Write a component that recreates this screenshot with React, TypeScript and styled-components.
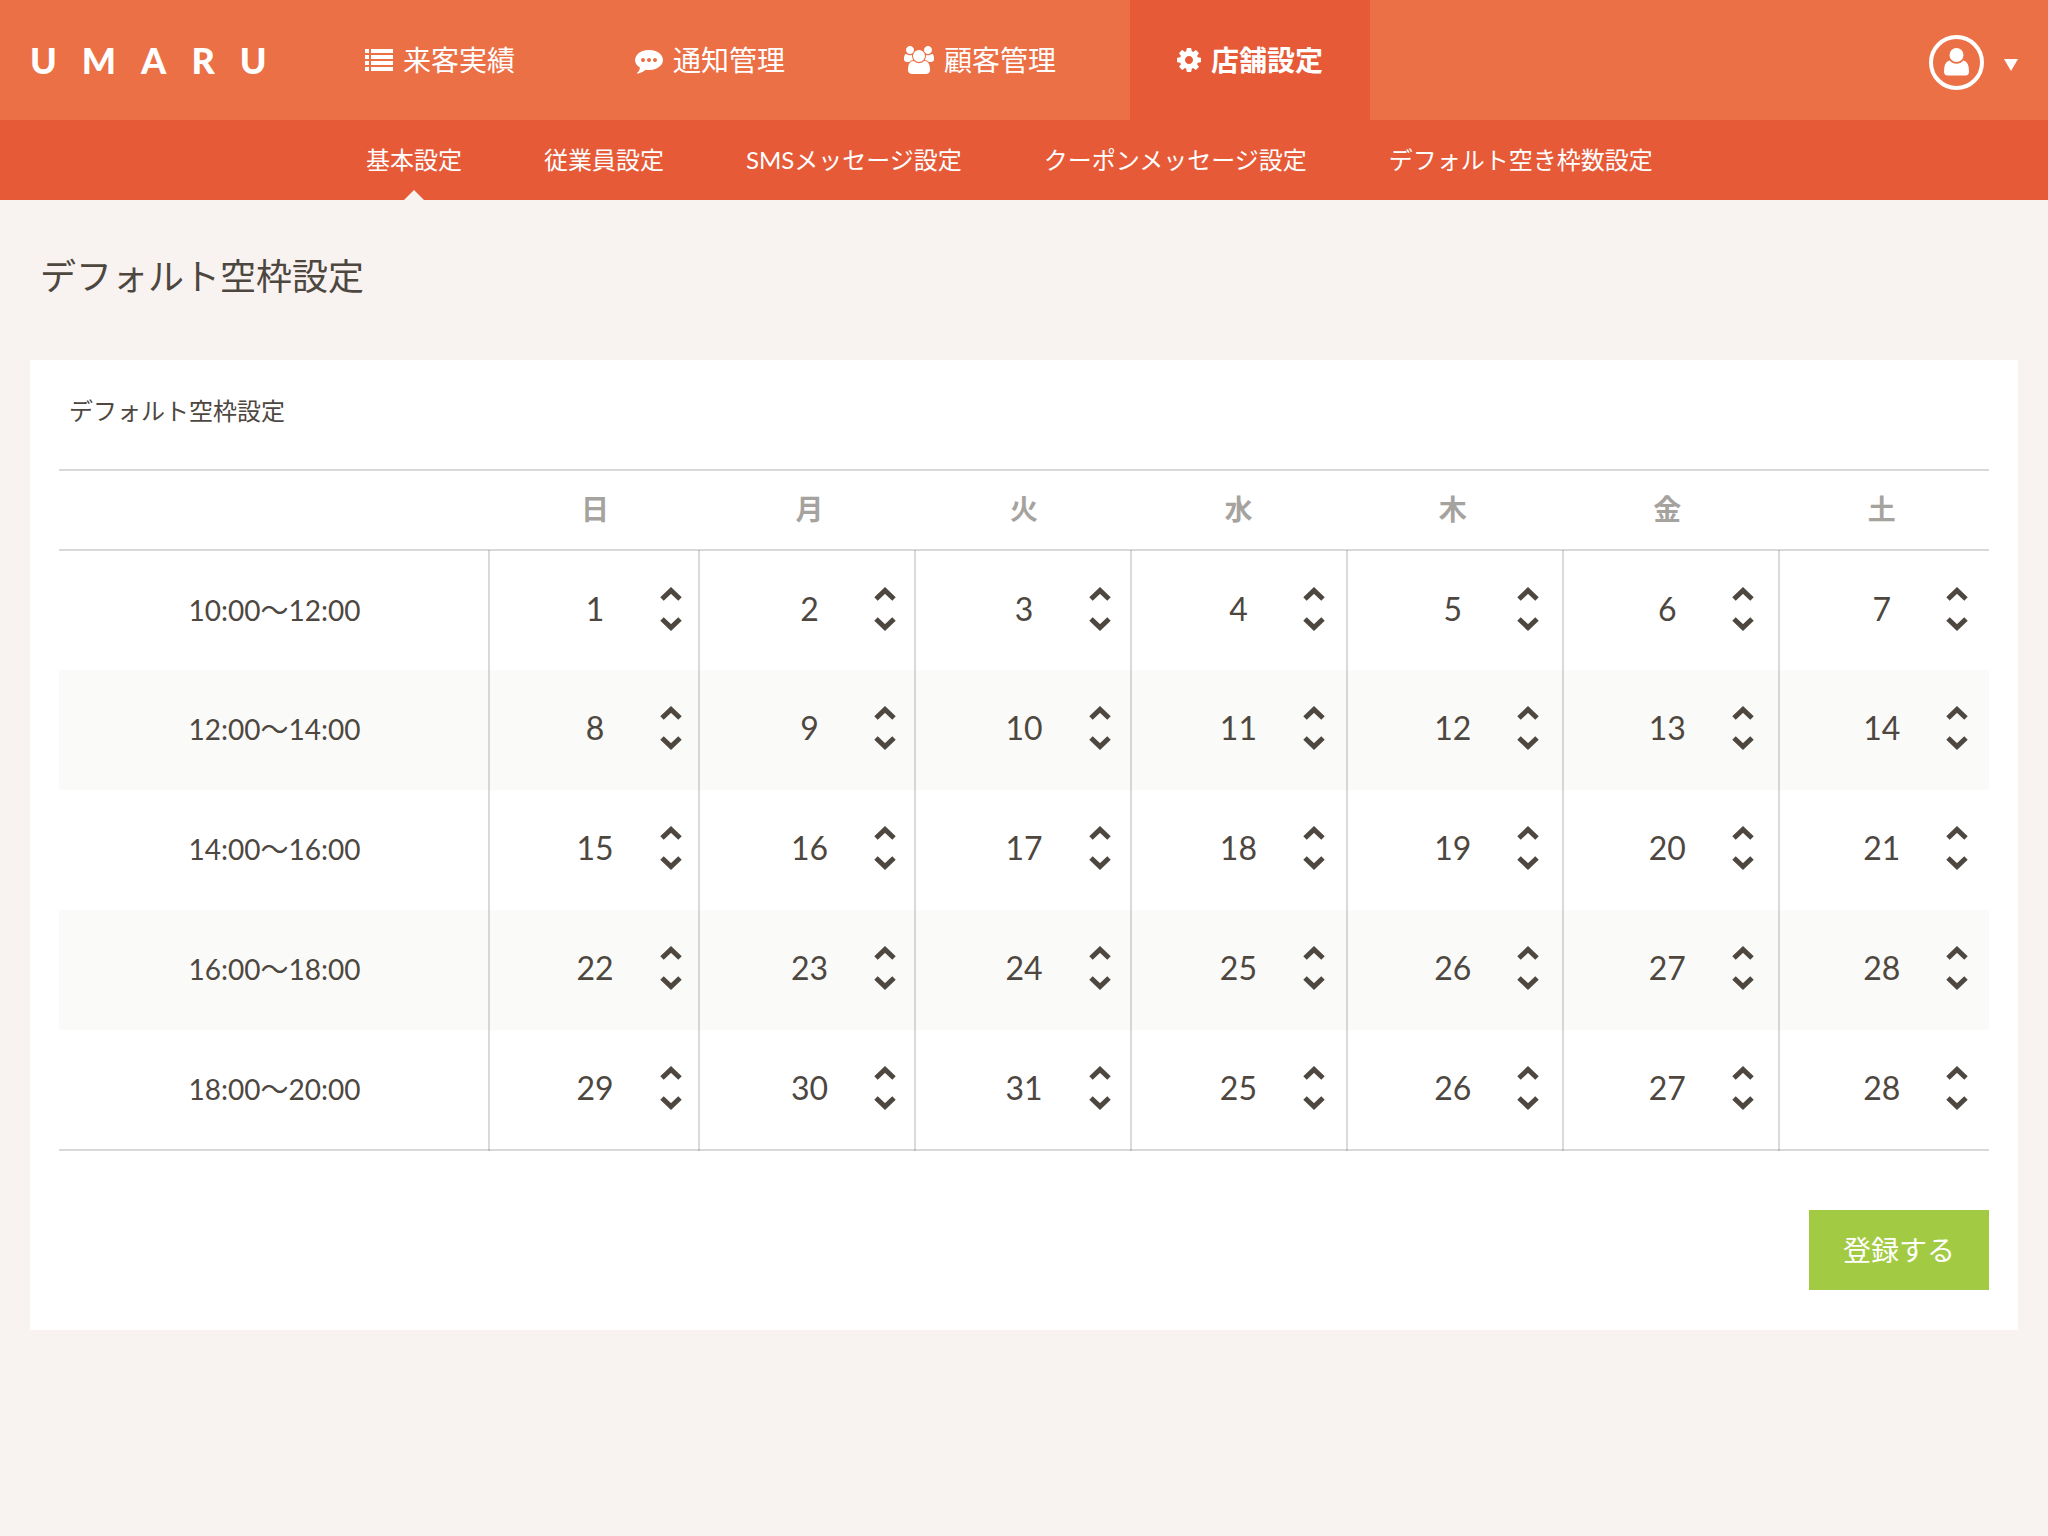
import React, { useState } from 'react';
import styled, { createGlobalStyle } from 'styled-components';

const GlobalStyle = createGlobalStyle`
  *, *::before, *::after { box-sizing: border-box; }
  body {
    margin: 0;
    background: #f8f3f0;
    color: #4d473f;
    font-family: Lato, "Noto Sans CJK JP", sans-serif;
  }
  button, input { font: inherit; color: inherit; }
`;

const Page = styled.div`
  min-height: 100vh;
`;

const TopBar = styled.header`
  display: flex;
  align-items: center;
  height: 120px;
  background: #eb7046;
  color: #fff;
`;

const Brand = styled.a`
  display: flex;
  flex: 0 0 320px;
  gap: 25px;
  padding-left: 30px;
  color: #fff;
  font-size: 36px;
  font-weight: 900;
  line-height: 48px;
  text-decoration: none;
`;

const MainNav = styled.nav`
  display: flex;
  flex: 1;
  align-self: stretch;
  gap: 30px;
`;

const MainLink = styled.a<{ $active?: boolean }>`
  display: flex;
  align-items: center;
  justify-content: center;
  gap: 10px;
  width: 240px;
  background: ${(p) => (p.$active ? '#e65a38' : 'transparent')};
  color: #fff;
  font-size: 28px;
  font-weight: ${(p) => (p.$active ? 700 : 400)};
  line-height: 40px;
  text-decoration: none;
`;

const Glyph = styled.svg`
  flex: none;
  height: 28px;
  fill: currentColor;
`;

const AccountButton = styled.button`
  display: flex;
  align-items: center;
  gap: 20px;
  margin-right: 30px;
  padding: 4px 0 0;
  border: 0;
  background: none;
  color: #fff;
  cursor: pointer;
`;

const Avatar = styled.span`
  display: flex;
  align-items: center;
  justify-content: center;
  width: 55px;
  height: 55px;
  border: 4px solid #fff;
  border-radius: 50%;
`;

const SubNav = styled.nav`
  display: flex;
  gap: 82px;
  height: 80px;
  padding-left: 366px;
  background: #e65a38;
`;

const SubLink = styled.a<{ $active?: boolean }>`
  position: relative;
  display: flex;
  align-items: center;
  color: #fff;
  font-size: 24px;
  line-height: 36px;
  text-decoration: none;
  white-space: nowrap;

  &::after {
    content: '';
    display: ${(p) => (p.$active ? 'block' : 'none')};
    position: absolute;
    bottom: 0;
    left: 50%;
    margin-left: -10px;
    border: 10px solid transparent;
    border-top: 0;
    border-bottom-color: #f8f3f0;
  }
`;

const Main = styled.main`
  padding: 49px 30px;
`;

const PageTitle = styled.h1`
  margin: 0 0 57px;
  padding-left: 10px;
  font-size: 36px;
  font-weight: 400;
  line-height: 54px;
`;

const Card = styled.section`
  padding: 33px 29px 40px;
  background: #fff;
`;

const CardTitle = styled.h2`
  margin: 0 0 40px;
  padding-left: 10px;
  font-size: 24px;
  font-weight: 400;
  line-height: 36px;
`;

const Schedule = styled.div`
  display: grid;
  grid-template-rows: 81px auto;
`;

const SlotTable = styled.table`
  grid-area: 1 / 1 / 3 / 2;
  width: 100%;
  border-collapse: separate;
  border-spacing: 0;
  border-bottom: 2px solid #d9d9d9;
  table-layout: fixed;
`;

const Rules = styled.div`
  grid-area: 2 / 1 / 3 / 2;
  display: grid;
  grid-template-columns: 430fr 210fr repeat(5, 216fr) 210fr;
  z-index: 1;
  pointer-events: none;
`;

const Rule = styled.span`
  border-right: 2px solid rgba(77, 71, 63, 0.2);
  margin-right: -1px;

  &:last-child { border-right: 0; }
`;

const DayHead = styled.th`
  height: 82px;
  padding: 0 0 2px;
  border-top: 2px solid #d9d9d9;
  border-bottom: 2px solid #d9d9d9;
  color: #a6a39f;
  font-size: 28px;
  font-weight: 700;
  line-height: 40px;
`;

const SlotRow = styled.tr`
  &:nth-child(even) { background: #fafaf8; }
  height: 120px;
  &:first-child, &:last-child { height: 119px; }
`;

const TimeHead = styled.th`
  padding: 0 0 2px 2px;
  font-size: 28px;
  font-weight: 400;
  line-height: 40px;
`;

const SlotCell = styled.td`
  padding: 0 0 4px;
`;

const Stepper = styled.div`
  display: grid;
  grid-template-columns: 1fr 64px 1fr;
  align-items: center;
`;

const Count = styled.input`
  grid-column: 2;
  width: 100%;
  height: 40px;
  padding: 0;
  border: 0;
  outline: 0;
  background: none;
  font-size: 32px;
  line-height: 40px;
  text-align: center;
  appearance: textfield;

  &::-webkit-inner-spin-button,
  &::-webkit-outer-spin-button { appearance: none; margin: 0; }
`;

const Arrows = styled.div`
  display: grid;
  justify-content: center;
  padding-left: 12px;
`;

const ArrowButton = styled.button`
  display: flex;
  align-items: center;
  justify-content: center;
  width: 40px;
  height: 30px;
  padding: 0;
  border: 0;
  background: none;
  cursor: pointer;
`;

const Actions = styled.div`
  display: flex;
  justify-content: flex-end;
  margin-top: 59px;
`;

const SubmitButton = styled.button`
  width: 180px;
  height: 80px;
  padding: 0;
  border: 0;
  background: #a2cb43;
  color: #fff;
  font-size: 28px;
  line-height: 40px;
  cursor: pointer;
`;

const ListIcon = () => (
  <Glyph viewBox="0 0 28 28" width="28" aria-hidden="true">
    <path d="M0 3h4v4H0zM6 3h22v4H6zM0 9h4v4H0zM6 9h22v4H6zM0 15h4v4H0zM6 15h22v4H6zM0 21h4v4H0zM6 21h22v4H6z" />
  </Glyph>
);

const CommentIcon = () => (
  <Glyph viewBox="0 0 1792 1792" width="28" aria-hidden="true">
    <path d="M640 896q0-53-37.5-90.5t-90.5-37.5-90.5 37.5-37.5 90.5 37.5 90.5 90.5 37.5 90.5-37.5 37.5-90.5zm384 0q0-53-37.5-90.5t-90.5-37.5-90.5 37.5-37.5 90.5 37.5 90.5 90.5 37.5 90.5-37.5 37.5-90.5zm384 0q0-53-37.5-90.5t-90.5-37.5-90.5 37.5-37.5 90.5 37.5 90.5 90.5 37.5 90.5-37.5 37.5-90.5zm384 0q0 174-120 321.5t-326 233-450 85.5q-110 0-211-18-173 173-435 229-52 10-86 13-12 1-22-6t-13-18q-4-15 20-37 5-5 23.5-21.5t25.5-23.5 23.5-25.5 24-31.5 20.5-37 20-48 14.5-57.5 12.5-72.5q-146-90-229.5-216.5t-83.5-269.5q0-174 120-321.5t326-233 450-85.5 450 85.5 326 233 120 321.5z" />
  </Glyph>
);

const GroupIcon = () => (
  <Glyph viewBox="-64 0 1920 1792" width="30" aria-hidden="true">
    <path d="M529 896q-162 5-265 128h-134q-82 0-138-40.5t-56-118.5q0-353 124-353 6 0 43.5 21t97.5 42.5 119 21.5q67 0 133-23-5 37-5 66 0 139 81 256zm1071 637q0 120-73 189.5t-194 69.5h-874q-121 0-194-69.5t-73-189.5q0-53 3.5-103.5t14-109 26.5-108.5 43-97.5 62-81 85.5-53.5 111.5-20q10 0 43 21.5t73 48 107 48 135 21.5 135-21.5 107-48 73-48 43-21.5q61 0 111.5 20t85.5 53.5 62 81 43 97.5 26.5 108.5 14 109 3.5 103.5zm-1024-1277q0 106-75 181t-181 75-181-75-75-181 75-181 181-75 181 75 75 181zm704 384q0 159-112.5 271.5t-271.5 112.5-271.5-112.5-112.5-271.5 112.5-271.5 271.5-112.5 271.5 112.5 112.5 271.5zm576 225q0 78-56 118.5t-138 40.5h-134q-103-123-265-128 81-117 81-256 0-29-5-66 66 23 133 23 59 0 119-21.5t97.5-42.5 43.5-21q124 0 124 353zm-128-609q0 106-75 181t-181 75-181-75-75-181 75-181 181-75 181 75 75 181z" />
  </Glyph>
);

const GearIcon = () => (
  <Glyph viewBox="128 0 1536 1792" width="24" aria-hidden="true">
    <path d="M1152 896q0-106-75-181t-181-75-181 75-75 181 75 181 181 75 181-75 75-181zm512-109v222q0 12-8 23t-20 13l-185 28q-19 54-39 91 35 50 107 138 10 12 10 25t-9 23q-27 37-99 108t-94 71q-12 0-26-9l-138-108q-44 23-91 38-16 136-29 186-7 28-36 28h-222q-14 0-24.5-8.5t-11.5-21.5l-28-184q-49-16-90-37l-141 107q-10 9-25 9-14 0-25-11-126-114-165-168-7-10-7-23 0-12 8-23 15-21 51-66.5t54-70.5q-27-50-41-99l-183-27q-13-2-21-12.5t-8-23.5v-222q0-12 8-23t19-13l186-28q14-46 39-92-40-57-107-138-10-12-10-24 0-10 9-23 26-36 98.5-107.5t94.5-71.5q13 0 26 10l138 107q44-23 91-38 16-136 29-186 7-28 36-28h222q14 0 24.5 8.5t11.5 21.5l28 184q49 16 90 37l142-107q9-9 24-9 13 0 25 10 129 119 165 170 7 8 7 22 0 12-8 23-15 21-51 66.5t-54 70.5q26 50 41 98l183 28q13 2 21 12.5t8 23.5z" />
  </Glyph>
);

const UserIcon = () => (
  <Glyph viewBox="0 0 25 28" width="25" aria-hidden="true">
    <circle cx="12.5" cy="7" r="7" />
    <path d="M5.800 12.500a8.600 8.600 0 0 0 13.400 0Q25 13.500 25 23.500 25 27.500 21.500 27.500H3.500Q0 27.500 0 23.500 0 13.500 5.800 12.500z" />
  </Glyph>
);

const Caret = () => (
  <svg width="14" height="18" viewBox="0 0 14 18" fill="currentColor" aria-hidden="true">
    <path d="M0 6h14L7 18z" />
  </svg>
);

const Chevron = ({ up }: { up?: boolean }) => (
  <svg width="22" height="14" viewBox="0 0 22 14" fill="none" stroke="currentColor" strokeWidth="5" aria-hidden="true">
    <path d={up ? 'M2 12l9-8.500 9 8.500' : 'M2 2l9 8.500L20 2'} />
  </svg>
);

const mainLinks = [
  { label: '来客実績', icon: <ListIcon /> },
  { label: '通知管理', icon: <CommentIcon /> },
  { label: '顧客管理', icon: <GroupIcon /> },
  { label: '店舗設定', icon: <GearIcon />, active: true },
];

const subLinks = [
  '基本設定',
  '従業員設定',
  'SMSメッセージ設定',
  'クーポンメッセージ設定',
  'デフォルト空き枠数設定',
];

const days = ['日', '月', '火', '水', '木', '金', '土'];

const slots = [
  { time: '10:00〜12:00', counts: [1, 2, 3, 4, 5, 6, 7] },
  { time: '12:00〜14:00', counts: [8, 9, 10, 11, 12, 13, 14] },
  { time: '14:00〜16:00', counts: [15, 16, 17, 18, 19, 20, 21] },
  { time: '16:00〜18:00', counts: [22, 23, 24, 25, 26, 27, 28] },
  { time: '18:00〜20:00', counts: [29, 30, 31, 25, 26, 27, 28] },
];

function CountStepper({ label, initial }: { label: string; initial: number }) {
  const [value, setValue] = useState(initial);
  return (
    <Stepper>
      <Count
        type="number"
        min={0}
        aria-label={label}
        value={value}
        onChange={(e) => setValue(Number(e.target.value))}
      />
      <Arrows>
        <ArrowButton type="button" aria-label={`${label} +`} onClick={() => setValue(value + 1)}>
          <Chevron up />
        </ArrowButton>
        <ArrowButton type="button" aria-label={`${label} -`} onClick={() => setValue(Math.max(0, value - 1))}>
          <Chevron />
        </ArrowButton>
      </Arrows>
    </Stepper>
  );
}

export default function App() {
  return (
    <Page>
      <GlobalStyle />
      <TopBar>
        <Brand href="#" aria-label="UMARU">
          {'UMARU'.split('').map((letter, i) => (
            <span key={i}>{letter}</span>
          ))}
        </Brand>
        <MainNav>
          {mainLinks.map((link) => (
            <MainLink key={link.label} href="#" $active={link.active}>
              {link.icon}
              {link.label}
            </MainLink>
          ))}
        </MainNav>
        <AccountButton type="button" aria-label="アカウント">
          <Avatar>
            <UserIcon />
          </Avatar>
          <Caret />
        </AccountButton>
      </TopBar>
      <SubNav>
        {subLinks.map((label, i) => (
          <SubLink key={label} href="#" $active={i === 0}>
            {label}
          </SubLink>
        ))}
      </SubNav>
      <Main>
        <PageTitle>デフォルト空枠設定</PageTitle>
        <Card>
          <CardTitle>デフォルト空枠設定</CardTitle>
          <Schedule>
            <SlotTable>
              <thead>
                <tr>
                  <DayHead as="td" colSpan={2} />
                  {days.map((day) => (
                    <DayHead key={day} scope="col">
                      {day}
                    </DayHead>
                  ))}
                </tr>
              </thead>
              <tbody>
                {slots.map((slot) => (
                  <SlotRow key={slot.time}>
                    <TimeHead scope="row" colSpan={2}>
                      {slot.time}
                    </TimeHead>
                    {slot.counts.map((count, i) => (
                      <SlotCell key={days[i]}>
                        <CountStepper label={`${days[i]} ${slot.time}`} initial={count} />
                      </SlotCell>
                    ))}
                  </SlotRow>
                ))}
              </tbody>
            </SlotTable>
            <Rules aria-hidden="true">
              {Array.from({ length: 8 }, (_, i) => (
                <Rule key={i} />
              ))}
            </Rules>
          </Schedule>
          <Actions>
            <SubmitButton type="submit">登録する</SubmitButton>
          </Actions>
        </Card>
      </Main>
    </Page>
  );
}
